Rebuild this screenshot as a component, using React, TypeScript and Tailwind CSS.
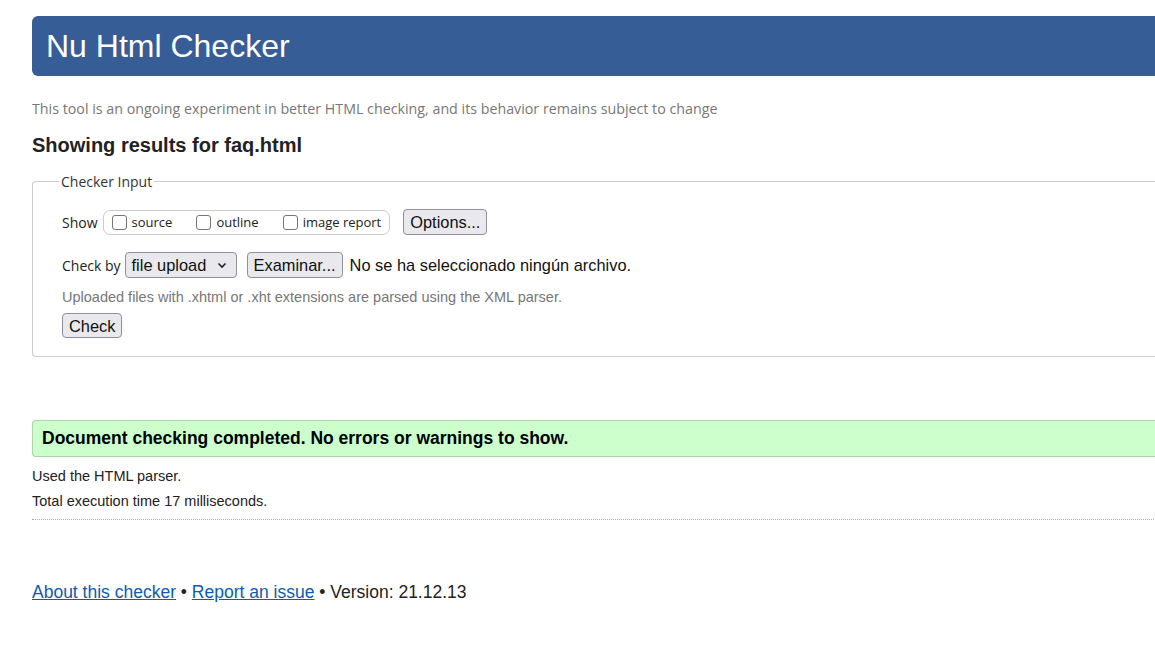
import React from 'react'

const ui = { fontFamily: '"Open Sans", "Noto Sans", sans-serif' }
const arial = { fontFamily: '"Liberation Sans", Arial, sans-serif' }

function Btn({ children, className = '' }: { children: React.ReactNode; className?: string }) {
    return (
        <span
            className={`inline-flex items-center rounded-[4px] border border-[#8f8f9d] bg-[#e9e9ed] px-[6px] text-[16.4px] leading-[22px] text-[#111] ${className}`}
            style={arial}
        >
            {children}
        </span>
    )
}

function Box({ label }: { label: string }) {
    return (
        <span className="flex items-center gap-[5px]">
            <span className="h-[15px] w-[15px] rounded-[3px] border border-[#767676] bg-white" />
            <span className="text-[13px] text-[#222]">{label}</span>
        </span>
    )
}

export default function App() {
    return (
        <div className="min-h-screen w-full overflow-hidden bg-white" style={arial}>
            <div className="w-[1200px] pl-[32px] pt-[16px]">
                {/* Header */}
                <div className="flex h-[60px] items-center rounded-l-[6px] bg-[#365d95] pl-[14px]">
                    <h1 className="text-[32px] leading-none text-white">Nu Html Checker</h1>
                </div>

                <p className="mt-[22px] text-[14.25px] text-[#777]" style={ui}>
                    This tool is an ongoing experiment in better HTML checking, and its behavior remains subject to change
                </p>

                <h2 className="mt-[11px] text-[20px] font-bold text-[#222]">Showing results for faq.html</h2>

                {/* Checker input */}
                <fieldset className="mt-[11px] rounded-l-[4px] border border-r-0 border-[#cccccc] pb-[17px] pl-[29px] pt-[17px]">
                    <legend className="ml-[-3px] px-[2px] text-[14px] text-[#333]" style={ui}>
                        Checker Input
                    </legend>

                    <div className="flex items-center" style={ui}>
                        <span className="text-[14px] text-[#222]">Show</span>
                        <div className="ml-[5px] flex h-[25px] items-center gap-[24px] rounded-[7px] border border-[#cccccc] px-[8px]">
                            <Box label="source" />
                            <Box label="outline" />
                            <Box label="image report" />
                        </div>
                        <Btn className="ml-[13px] h-[26px]">Options...</Btn>
                    </div>

                    <div className="mt-[17px] flex items-center">
                        <span className="text-[14px] text-[#222]" style={ui}>
                            Check by
                        </span>
                        <Btn className="ml-[4px] h-[26px] w-[112px] justify-between">
                            file upload
                            <svg width="12" height="12" viewBox="0 0 12 12" className="mr-[2px]">
                                <path d="M2.5 4.5 L6 8 L9.5 4.5" fill="none" stroke="#222" strokeWidth="1.6" />
                            </svg>
                        </Btn>
                        <Btn className="ml-[10px] h-[26px] px-[4px]">Examinar...</Btn>
                        <span className="ml-[7px] text-[16.4px] text-[#111]">No se ha seleccionado ningún archivo.</span>
                    </div>

                    <p className="mt-[9px] text-[14.5px] text-[#777]">
                        Uploaded files with .xhtml or .xht extensions are parsed using the XML parser.
                    </p>

                    <Btn className="mt-[4px] h-[25px]">Check</Btn>
                </fieldset>

                {/* Results */}
                <div className="mt-[63px] flex h-[37px] items-center rounded-l-[4px] border border-r-0 border-[#a8d8a8] bg-[#ccffcc] pl-[9px]">
                    <span className="text-[17.5px] font-bold text-black">
                        Document checking completed. No errors or warnings to show.
                    </span>
                </div>

                <p className="mt-[9px] text-[14.5px] text-[#222]">Used the HTML parser.</p>
                <p className="mt-[4px] text-[14.5px] text-[#222]">Total execution time 17 milliseconds.</p>
                <div className="mt-[6px] border-b border-dotted border-[#aaaaaa]" />

                <p className="mt-[59px] text-[17.5px] text-[#222]">
                    <a className="text-[#0b5cb5] underline" href="#">
                        About this checker
                    </a>{' '}
                    •{' '}
                    <a className="text-[#0b5cb5] underline" href="#">
                        Report an issue
                    </a>{' '}
                    • Version: 21.12.13
                </p>
            </div>
        </div>
    )
}
